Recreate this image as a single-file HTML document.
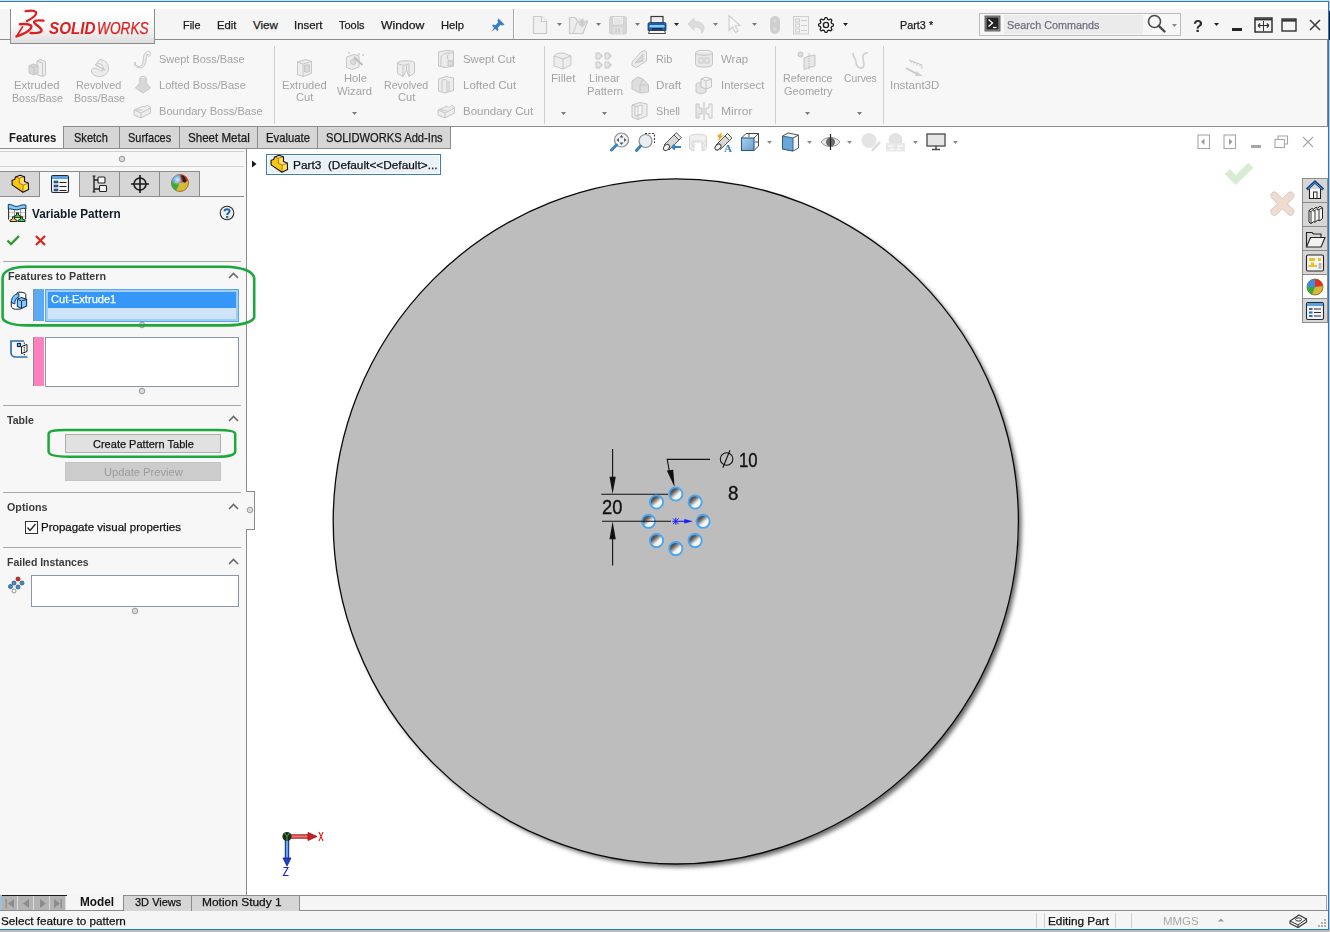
<!DOCTYPE html>
<html><head><meta charset="utf-8"><title>SOLIDWORKS</title>
<style>
html,body{margin:0;padding:0;width:1330px;height:932px;overflow:hidden;background:#f5f5f5;}
body{position:relative;font-family:"Liberation Sans",sans-serif;}
body>div,body>svg{position:absolute;box-sizing:border-box;}
.t{white-space:pre;-webkit-text-stroke:0.25px currentColor;}
</style></head><body>
<div style="left:0px;top:0px;width:1330px;height:932px;background:#f5f5f5"></div>
<div style="left:0px;top:0px;width:1330px;height:1px;background:#e6ded2"></div>
<div style="left:0px;top:1px;width:1329px;height:1px;background:#1c7cd5"></div>
<div style="left:0px;top:2px;width:1328px;height:7px;background:#ffffff"></div>
<div style="left:0px;top:9px;width:1328px;height:30px;background:#f5f5f5"></div>
<div style="left:0px;top:39px;width:1328px;height:1px;background:#8c8c8c"></div>
<div style="left:0px;top:40px;width:1328px;height:108px;background:#f7f7f7"></div>
<div style="left:10px;top:9px;width:145px;height:35px;background:linear-gradient(#ffffff 0%,#fbfbfb 45%,#dedede 100%);border:1px solid #8c8c8c;border-top:none"></div>
<svg style="left:10px;top:6px;" width="40" height="36" viewBox="0 0 40 36"><g fill="none" stroke="#dc1f1f" stroke-linecap="round" stroke-linejoin="round" transform="translate(-10,-6)"><path d="M25.6 11.2 C29 10.6 35 10.2 36.2 12.6 C36.4 15.6 31 19 27 21" stroke-width="2.2"/><path d="M19.8 24.2 C24 23.6 31.4 24 31.4 26.6 C31 30.6 23 34.6 16.4 36.4" stroke-width="2.4"/><path d="M22.6 26.8 L16.6 36.2" stroke-width="1.6"/><path d="M43.6 20.6 C39.5 20.2 34.2 20.2 34 22 C34.2 24.6 41.4 27 41.6 30.6 C41.4 33.2 35 33.2 30.6 33" stroke-width="2.4"/></g></svg>
<div class="t" style="left:49.10px;top:20px;font-size:15.6px;line-height:17.425px;color:#dc1f1f;font-weight:bold;-webkit-text-stroke:0;transform:scaleX(0.9757);transform-origin:0 0;font-style:italic;">SOLID</div>
<div class="t" style="left:96.80px;top:20px;font-size:15.6px;line-height:17.425px;color:#dc1f1f;transform:scaleX(0.8784);transform-origin:0 0;font-style:italic;">WORKS</div>
<div class="t" style="left:183.20px;top:19px;font-size:11.6px;line-height:12.957px;color:#1a1a1a;transform:scaleX(0.9370);transform-origin:0 0;">File</div>
<div class="t" style="left:217.30px;top:19px;font-size:11.6px;line-height:12.957px;color:#1a1a1a;transform:scaleX(0.9745);transform-origin:0 0;">Edit</div>
<div class="t" style="left:253.00px;top:19px;font-size:11.6px;line-height:12.957px;color:#1a1a1a;">View</div>
<div class="t" style="left:294.30px;top:19px;font-size:11.6px;line-height:12.957px;color:#1a1a1a;transform:scaleX(0.9828);transform-origin:0 0;">Insert</div>
<div class="t" style="left:339.20px;top:19px;font-size:11.6px;line-height:12.957px;color:#1a1a1a;transform:scaleX(0.9451);transform-origin:0 0;">Tools</div>
<div class="t" style="left:381.40px;top:19px;font-size:11.6px;line-height:12.957px;color:#1a1a1a;transform:scaleX(1.0534);transform-origin:0 0;">Window</div>
<div class="t" style="left:441.30px;top:19px;font-size:11.6px;line-height:12.957px;color:#1a1a1a;transform:scaleX(0.9690);transform-origin:0 0;">Help</div>
<div class="t" style="left:899.50px;top:19px;font-size:11.6px;line-height:12.957px;color:#1a1a1a;transform:scaleX(0.9340);transform-origin:0 0;">Part3 *</div>
<svg style="left:490px;top:17px;" width="16" height="16" viewBox="0 0 16 16"><g fill="#3a7fc1"><path d="M8.5 1.5 L14.5 7.5 L12.5 8.5 L10.5 8 L7.8 10.7 L8.4 13 L7.3 14 L2 8.7 L3 7.6 L5.3 8.2 L8 5.5 L7.5 3.5 Z"/><path d="M4.5 10.2 L1.2 14.8 L5.8 11.5 Z"/></g></svg>
<div style="left:513px;top:9px;width:1px;height:30px;background:#a9a9a9"></div>
<div style="left:514px;top:9px;width:1px;height:30px;background:#ffffff"></div>
<svg style="left:532px;top:15px;" width="16" height="20" viewBox="0 0 16 20"><path d="M1.5 1.5 H9.5 L14.5 6.5 V18.5 H1.5 Z" fill="#f0f0f0" stroke="#c9c9c9" stroke-width="1.2"/><path d="M9.5 1.5 V6.5 H14.5" fill="#fafafa" stroke="#c9c9c9" stroke-width="1.2"/></svg>
<svg style="left:557px;top:23px;" width="5" height="3" viewBox="0 0 5 3"><path d="M0 0 H5 L2.5 3 Z" fill="#7a7a7a"/></svg>
<svg style="left:568px;top:15px;" width="22" height="20" viewBox="0 0 22 20"><path d="M1.5 18.5 V2.5 H7 L9 4.5 V6 H19.5 L15 18.5 Z" fill="#ededed" stroke="#c9c9c9" stroke-width="1.2"/><path d="M5 18.5 L9 7.5 H20" fill="none" stroke="#cfcfcf" stroke-width="1.2"/><path d="M10 2 L13.5 5.5 V3.5 L15.5 3.5 L15.5 8.5 H18 L14 12.5 L10 8.5 H12.5 V6 Z" fill="#cccccc"/></svg>
<svg style="left:596px;top:23px;" width="5" height="3" viewBox="0 0 5 3"><path d="M0 0 H5 L2.5 3 Z" fill="#7a7a7a"/></svg>
<svg style="left:608px;top:15px;" width="20" height="20" viewBox="0 0 20 20"><rect x="1.5" y="1.5" width="17" height="17.5" rx="2" fill="#d6d6d6" stroke="#d0d0d0"/><rect x="4.5" y="1.5" width="11" height="8.5" fill="#f2f2f2" stroke="#cfcfcf"/><path d="M6 4H14M6 6H14M6 8H14" stroke="#d9d9d9"/><rect x="5.5" y="12" width="9" height="7" fill="#e2e2e2"/><path d="M8 13V18.5M11 13V18.5" stroke="#c8c8c8" stroke-width="1.3"/></svg>
<svg style="left:635px;top:23px;" width="5" height="3" viewBox="0 0 5 3"><path d="M0 0 H5 L2.5 3 Z" fill="#7a7a7a"/></svg>
<svg style="left:647px;top:15px;" width="20" height="20" viewBox="0 0 20 20"><rect x="4" y="1.5" width="12" height="9" fill="#efefef" stroke="#3a3a3a" stroke-width="1.2"/><path d="M1 9 Q1 7.5 2.5 7.5 H17.5 Q19 7.5 19 9 V15.5 H1 Z" fill="#1f5e9e" stroke="#0f3b6e" stroke-width="0.8"/><rect x="2.5" y="10" width="15" height="2.5" fill="#8ccaf2"/><rect x="5" y="13" width="10" height="1.6" fill="#0b2f5a"/><path d="M2.5 15.5 H17.5 L18.5 18.5 H1.5 Z" fill="#f5f5f5" stroke="#333" stroke-width="0.9"/></svg>
<svg style="left:674px;top:23px;" width="5" height="3" viewBox="0 0 5 3"><path d="M0 0 H5 L2.5 3 Z" fill="#222"/></svg>
<svg style="left:686px;top:16px;" width="20" height="18" viewBox="0 0 20 18"><path d="M2 8 L8 2 V5.5 C14 5 18 8 18 12 C18 14 17 16 15.5 17 C16 13 13 10.5 8 11 V14.5 Z" fill="#dcdcdc" stroke="#cfcfcf" stroke-width="0.8"/></svg>
<svg style="left:713px;top:23px;" width="5" height="3" viewBox="0 0 5 3"><path d="M0 0 H5 L2.5 3 Z" fill="#7a7a7a"/></svg>
<svg style="left:727px;top:14px;" width="16" height="20" viewBox="0 0 16 20"><path d="M2 1.5 V16.5 L5.5 13 L8.5 18.5 L11 17.2 L8.2 11.8 L13 11.5 Z" fill="#f7f7f7" stroke="#cdcdcd" stroke-width="1.1"/></svg>
<svg style="left:752px;top:23px;" width="5" height="3" viewBox="0 0 5 3"><path d="M0 0 H5 L2.5 3 Z" fill="#7a7a7a"/></svg>
<svg style="left:769px;top:15px;" width="12" height="20" viewBox="0 0 12 20"><rect x="1" y="1" width="10" height="18" rx="5" fill="#cfcfcf"/><path d="M6 4.5V7.5M4.5 6H7.5M6 12.5V15.5M4.5 14H7.5" stroke="#e6e6e6" stroke-width="0.8"/></svg>
<svg style="left:792px;top:15px;" width="18" height="20" viewBox="0 0 18 20"><rect x="1.5" y="1.5" width="15" height="17.5" fill="#f3f3f3" stroke="#cfcfcf"/><g fill="none" stroke="#cdcdcd"><rect x="3.5" y="4" width="4" height="3"/><rect x="3.5" y="9" width="4" height="3"/><rect x="3.5" y="14" width="4" height="3"/><path d="M9 5.5H15M9 10.5H15M9 15.5H15"/></g></svg>
<svg style="left:818px;top:17px;" width="16" height="16" viewBox="0 0 16 16"><path d="M15.56 7.26 L15.56 8.74 L13.55 9.68 L13.12 10.73 L13.87 12.82 L12.82 13.87 L10.73 13.12 L9.68 13.55 L8.74 15.56 L7.26 15.56 L6.32 13.55 L5.27 13.12 L3.18 13.87 L2.13 12.82 L2.88 10.73 L2.45 9.68 L0.44 8.74 L0.44 7.26 L2.45 6.32 L2.88 5.27 L2.13 3.18 L3.18 2.13 L5.27 2.88 L6.32 2.45 L7.26 0.44 L8.74 0.44 L9.68 2.45 L10.73 2.88 L12.82 2.13 L13.87 3.18 L13.12 5.27 L13.55 6.32 Z" fill="#fafafa" stroke="#1e1e1e" stroke-width="1.3" stroke-linejoin="round"/><circle cx="8" cy="8" r="2.6" fill="none" stroke="#1e1e1e" stroke-width="1.4"/></svg>
<svg style="left:843px;top:23px;" width="5" height="3" viewBox="0 0 5 3"><path d="M0 0 H5 L2.5 3 Z" fill="#222"/></svg>
<div style="left:979px;top:13px;width:202px;height:23px;background:#f7f7f7;border:1px solid #bcbcbc"></div>
<div style="left:1004px;top:15px;width:139px;height:19px;background:#ebebeb"></div>
<svg style="left:984px;top:15px;" width="17" height="17" viewBox="0 0 17 17"><rect x="1" y="1" width="15" height="15" fill="#1a1a1a" stroke="#6b6b6b" stroke-width="1"/><rect x="2" y="2" width="13" height="13" fill="#222" stroke="#e8e8e8" stroke-width="0.6"/><path d="M4.5 4.5 L8.5 8 L4.5 11.5" fill="none" stroke="#fff" stroke-width="1.3"/><path d="M9 12.5 H12.5" stroke="#fff" stroke-width="1.2"/></svg>
<div class="t" style="left:1006.60px;top:19px;font-size:11.6px;line-height:12.957px;color:#6e6e80;transform:scaleX(0.9306);transform-origin:0 0;">Search Commands</div>
<svg style="left:1147px;top:14px;" width="20" height="19" viewBox="0 0 20 19"><circle cx="7.5" cy="7.5" r="6" fill="none" stroke="#4a4a4a" stroke-width="1.6"/><path d="M11.8 11.8 L17.5 17.5" stroke="#4a4a4a" stroke-width="2.4" stroke-linecap="round"/></svg>
<svg style="left:1172px;top:24px;" width="5" height="3" viewBox="0 0 5 3"><path d="M0 0 H5 L2.5 3 Z" fill="#8a8a8a"/></svg>
<div class="t" style="left:1193.00px;top:17px;font-size:16.5px;line-height:18.430px;color:#2a2a2a;font-weight:bold;-webkit-text-stroke:0;transform:scaleX(0.9935);transform-origin:0 0;">?</div>
<svg style="left:1214px;top:23px;" width="5" height="3" viewBox="0 0 5 3"><path d="M0 0 H5 L2.5 3 Z" fill="#222"/></svg>
<div style="left:1232px;top:28px;width:10px;height:3px;background:#262626"></div>
<svg style="left:1254px;top:17px;" width="19" height="16" viewBox="0 0 19 16"><rect x="1" y="1" width="17" height="14" fill="none" stroke="#333" stroke-width="1.5"/><path d="M1 2.5H18" stroke="#333" stroke-width="1.8"/><path d="M9.5 4V14" stroke="#333" stroke-width="1"/><path d="M4 8.5H15M4 8.5L6.2 6.5M4 8.5L6.2 10.5M15 8.5L12.8 6.5M15 8.5L12.8 10.5" stroke="#333" stroke-width="1.2" fill="none"/></svg>
<svg style="left:1281px;top:18px;" width="16" height="14" viewBox="0 0 16 14"><rect x="1" y="1" width="14" height="12" fill="none" stroke="#333" stroke-width="1.4"/><path d="M1 2.5H15" stroke="#333" stroke-width="2.2"/></svg>
<svg style="left:1309px;top:19px;" width="12" height="12" viewBox="0 0 12 12"><path d="M1 1 L11 11 M11 1 L1 11" stroke="#3a3a3a" stroke-width="1.5"/></svg>
<svg style="left:27px;top:58px;" width="20" height="20" viewBox="0 0 20 20"><g stroke="#c6c6c6" stroke-width="1" fill="#e6e6e6" stroke-linejoin="round"><path d="M10 3 L13 1.5 L18.5 3.5 V17 L15.5 18.5 L10 16.5 Z" fill="#eeeeee"/><path d="M10 3 L15.5 5 V18.5" fill="none"/><path d="M2 8 L6 6 L11 7.5 V15 L7 17 L2 15 Z" fill="#d8d8d8"/><path d="M2 8 L7 9.5 V17 M7 9.5 L11 7.5" fill="none"/></g></svg>
<div class="t" style="left:14.20px;top:79px;font-size:11px;line-height:12.287px;color:#a3a3a3;-webkit-text-stroke:0;transform:scaleX(1.0351);transform-origin:0 0;">Extruded</div>
<div class="t" style="left:11.60px;top:92px;font-size:11px;line-height:12.287px;color:#a3a3a3;-webkit-text-stroke:0;transform:scaleX(0.9700);transform-origin:0 0;">Boss/Base</div>
<svg style="left:90px;top:58px;" width="20" height="20" viewBox="0 0 20 20"><g stroke="#c6c6c6" stroke-width="1" fill="#e6e6e6" stroke-linejoin="round"><path d="M9.5 1.5 C15 1.5 18.5 5.5 18.5 10 C18.5 15 14.5 18.5 9.5 18.5 C5 18.5 1.5 16 1.5 13 C1.5 10.5 4 9.5 6 10.5 L12.5 13 C13.5 11.5 13.5 8.5 12 7 C10.5 5.5 8 5.5 6.5 6 Z" fill="#ececec"/><path d="M5 6.5 L15 12" fill="none" stroke="#bdbdbd" stroke-width="1.2"/></g></svg>
<div class="t" style="left:76.30px;top:79px;font-size:11px;line-height:12.287px;color:#a3a3a3;-webkit-text-stroke:0;transform:scaleX(0.9876);transform-origin:0 0;">Revolved</div>
<div class="t" style="left:73.70px;top:92px;font-size:11px;line-height:12.287px;color:#a3a3a3;-webkit-text-stroke:0;transform:scaleX(0.9700);transform-origin:0 0;">Boss/Base</div>
<svg style="left:132px;top:49px;" width="20" height="20" viewBox="0 0 20 20"><g stroke="#c6c6c6" stroke-width="1" fill="#e6e6e6" stroke-linejoin="round"><path d="M3 13 C3 17 7 19 10 16 C11.5 14 11 9 12 6 C13 3 16 1.5 18 3 C19.5 4.5 18.5 7 16.5 7.5 L15 5 C14 8 14.5 13 12.5 16.5 C10.5 19.5 5 19.5 2.5 16 Z" fill="#ededed"/></g></svg>
<div class="t" style="left:158.60px;top:53px;font-size:11px;line-height:12.287px;color:#a3a3a3;-webkit-text-stroke:0;transform:scaleX(0.9937);transform-origin:0 0;">Swept Boss/Base</div>
<svg style="left:134px;top:75px;" width="18" height="19" viewBox="0 0 18 19"><g stroke="#c6c6c6" stroke-width="1" fill="#e6e6e6" stroke-linejoin="round"><ellipse cx="9" cy="3" rx="3.2" ry="1.6" fill="#f0f0f0"/><path d="M5.8 3 V8 L1.5 13 L9 18 L16.5 13 L12.2 8 V3" fill="#d8d8d8"/></g></svg>
<div class="t" style="left:158.60px;top:79px;font-size:11px;line-height:12.287px;color:#a3a3a3;-webkit-text-stroke:0;transform:scaleX(1.0065);transform-origin:0 0;">Lofted Boss/Base</div>
<svg style="left:132px;top:101px;" width="20" height="20" viewBox="0 0 20 20"><g stroke="#c6c6c6" stroke-width="1" fill="#e6e6e6" stroke-linejoin="round"><path d="M2 9 L11 5 C12 6 14 6 15 4 L18.5 6 V12 L9 17 L2 14 Z" fill="#ececec"/><path d="M2 9 L9 12 L18.5 7 M9 12 V17" fill="none"/><path d="M4 9 C7 8 8 10 10 9" fill="none"/></g></svg>
<div class="t" style="left:158.60px;top:105px;font-size:11px;line-height:12.287px;color:#a3a3a3;-webkit-text-stroke:0;transform:scaleX(1.0103);transform-origin:0 0;">Boundary Boss/Base</div>
<div style="left:274px;top:46px;width:1px;height:78px;background:#cfcfcf"></div>
<svg style="left:295px;top:58px;" width="19" height="20" viewBox="0 0 19 20"><g stroke="#c6c6c6" stroke-width="1" fill="#e6e6e6" stroke-linejoin="round"><path d="M2.5 4 L11 1.5 L16.5 3.5 V15.5 L8 18.5 L2.5 16.5 Z" fill="#eeeeee"/><path d="M2.5 4 L8 6 L16.5 3.5 M8 6 V18.5" fill="none"/><rect x="9.5" y="7" width="5" height="7" fill="#dadada"/></g></svg>
<div class="t" style="left:281.60px;top:79px;font-size:11px;line-height:12.287px;color:#a3a3a3;-webkit-text-stroke:0;transform:scaleX(1.0169);transform-origin:0 0;">Extruded</div>
<div class="t" style="left:295.70px;top:91px;font-size:11px;line-height:12.287px;color:#a3a3a3;-webkit-text-stroke:0;transform:scaleX(1.0056);transform-origin:0 0;">Cut</div>
<svg style="left:345px;top:51px;" width="20" height="20" viewBox="0 0 20 20"><g stroke="#c6c6c6" stroke-width="1" fill="#e6e6e6" stroke-linejoin="round"><path d="M1.5 6 L9 3.5 L14 5 V16 L7 18.5 L1.5 16.5 Z" fill="#ececec"/><circle cx="8.2" cy="11" r="2.6" fill="#dcdcdc"/><path d="M9 6 L17.5 14" stroke="#bdbdbd" stroke-width="2"/><path d="M14 2 L14 4 M13 3 H15 M18 3 V5 M17 4 H19 M4 1 V3 M3 2 H5" stroke="#cccccc"/></g></svg>
<div class="t" style="left:343.50px;top:72px;font-size:11px;line-height:12.287px;color:#a3a3a3;-webkit-text-stroke:0;transform:scaleX(1.0131);transform-origin:0 0;">Hole</div>
<div class="t" style="left:337.40px;top:85px;font-size:11px;line-height:12.287px;color:#a3a3a3;-webkit-text-stroke:0;transform:scaleX(1.0231);transform-origin:0 0;">Wizard</div>
<svg style="left:352px;top:112px;" width="5" height="3" viewBox="0 0 5 3"><path d="M0 0 H5 L2.5 3 Z" fill="#7a7a7a"/></svg>
<svg style="left:396px;top:58px;" width="20" height="20" viewBox="0 0 20 20"><g stroke="#c6c6c6" stroke-width="1" fill="#e6e6e6" stroke-linejoin="round"><path d="M1.5 5 C1.5 2 18.5 2 18.5 5 V15 L13 18.5 L10.5 12 L7 18.5 L1.5 15.5 Z" fill="#ececec"/><path d="M1.5 5 C3 7 8 7.5 10.5 7 V12 M10.5 7 L13 5.5 V18.5 M7 8 V18.5" fill="none"/></g></svg>
<div class="t" style="left:383.80px;top:79px;font-size:11px;line-height:12.287px;color:#a3a3a3;-webkit-text-stroke:0;transform:scaleX(0.9636);transform-origin:0 0;">Revolved</div>
<div class="t" style="left:397.60px;top:91px;font-size:11px;line-height:12.287px;color:#a3a3a3;-webkit-text-stroke:0;transform:scaleX(1.0114);transform-origin:0 0;">Cut</div>
<svg style="left:437px;top:49px;" width="18" height="20" viewBox="0 0 18 20"><g stroke="#c6c6c6" stroke-width="1" fill="#e6e6e6" stroke-linejoin="round"><path d="M1.5 3 L10 1.5 L16.5 2 V17 L8 18.5 L1.5 17 Z" fill="#ececec"/><path d="M4 17 V9 C4 6 8 4 12 4 H16.5 M12 4 C10 6 10 10 12 12 H16.5" fill="none"/><rect x="11" y="12" width="5" height="5" fill="#dcdcdc"/></g></svg>
<div class="t" style="left:462.50px;top:53px;font-size:11px;line-height:12.287px;color:#a3a3a3;-webkit-text-stroke:0;transform:scaleX(1.0263);transform-origin:0 0;">Swept Cut</div>
<svg style="left:437px;top:75px;" width="18" height="19" viewBox="0 0 18 19"><g stroke="#c6c6c6" stroke-width="1" fill="#e6e6e6" stroke-linejoin="round"><path d="M1.5 4 L9 1.5 L16.5 3 V15.5 L8 18 L1.5 16 Z" fill="#ececec"/><path d="M5 16.5 V6 C5 4 10 4 10 6 V17 M12 16.5 V6" fill="none"/></g></svg>
<div class="t" style="left:462.50px;top:79px;font-size:11px;line-height:12.287px;color:#a3a3a3;-webkit-text-stroke:0;transform:scaleX(1.0480);transform-origin:0 0;">Lofted Cut</div>
<svg style="left:436px;top:101px;" width="20" height="20" viewBox="0 0 20 20"><g stroke="#c6c6c6" stroke-width="1" fill="#e6e6e6" stroke-linejoin="round"><path d="M2 9 L11 5 C12 7 14 7 16 4 L18.5 6 V12 L9 17 L2 14 Z" fill="#ececec"/><path d="M2 9 L9 12 L18.5 7 M9 12 V17" fill="none"/><path d="M4 9 C7 8 9 11 11 9" fill="none"/></g></svg>
<div class="t" style="left:462.50px;top:105px;font-size:11px;line-height:12.287px;color:#a3a3a3;-webkit-text-stroke:0;transform:scaleX(1.0421);transform-origin:0 0;">Boundary Cut</div>
<div style="left:544px;top:46px;width:1px;height:78px;background:#cfcfcf"></div>
<svg style="left:552px;top:51px;" width="21" height="19" viewBox="0 0 21 19"><g stroke="#c6c6c6" stroke-width="1" fill="#e6e6e6" stroke-linejoin="round"><path d="M2 5 C5 1.5 11 1.5 14 3 L19 5 V14 L11 18 L2 15 Z" fill="#ededed"/><path d="M2 5 L11 8 L19 5 M11 8 V18" fill="none"/></g></svg>
<div class="t" style="left:551.20px;top:72px;font-size:11px;line-height:12.287px;color:#a3a3a3;-webkit-text-stroke:0;transform:scaleX(1.0556);transform-origin:0 0;">Fillet</div>
<svg style="left:561px;top:112px;" width="5" height="3" viewBox="0 0 5 3"><path d="M0 0 H5 L2.5 3 Z" fill="#7a7a7a"/></svg>
<svg style="left:594px;top:51px;" width="20" height="19" viewBox="0 0 20 19"><g stroke="#c6c6c6" stroke-width="1" fill="#e6e6e6" stroke-linejoin="round"><path d="M2 2 H6 V4 H8 V6 H6 V8 H2 Z M11 2 H15 V4 H17 V6 H15 V8 H11 Z M2 11 H6 V13 H8 V15 H6 V17 H2 Z M11 11 H15 V13 H17 V15 H15 V17 H11 Z" fill="#e6e6e6"/></g></svg>
<div class="t" style="left:589.00px;top:72px;font-size:11px;line-height:12.287px;color:#a3a3a3;-webkit-text-stroke:0;transform:scaleX(1.0072);transform-origin:0 0;">Linear</div>
<div class="t" style="left:586.60px;top:85px;font-size:11px;line-height:12.287px;color:#a3a3a3;-webkit-text-stroke:0;transform:scaleX(1.0176);transform-origin:0 0;">Pattern</div>
<svg style="left:602px;top:112px;" width="5" height="3" viewBox="0 0 5 3"><path d="M0 0 H5 L2.5 3 Z" fill="#7a7a7a"/></svg>
<svg style="left:630px;top:49px;" width="18" height="20" viewBox="0 0 18 20"><g stroke="#c6c6c6" stroke-width="1" fill="#e6e6e6" stroke-linejoin="round"><path d="M2 13 L11 3 L14 1.5 L16.5 3 V12 L6 18.5 L2 16.5 Z" fill="#ececec"/><path d="M5 14 L13 5 V12 Z" fill="#dadada"/></g></svg>
<div class="t" style="left:656.40px;top:53px;font-size:11px;line-height:12.287px;color:#a3a3a3;-webkit-text-stroke:0;transform:scaleX(0.9879);transform-origin:0 0;">Rib</div>
<svg style="left:630px;top:75px;" width="20" height="19" viewBox="0 0 20 19"><g stroke="#c6c6c6" stroke-width="1" fill="#e6e6e6" stroke-linejoin="round"><path d="M2 6 L8 2 L13 4 L18.5 10 V17 L10 18 L2 14 Z" fill="#dedede"/><path d="M13 4 L10 10 V18 M10 10 L18.5 10" fill="none"/></g></svg>
<div class="t" style="left:656.40px;top:79px;font-size:11px;line-height:12.287px;color:#a3a3a3;-webkit-text-stroke:0;transform:scaleX(1.0624);transform-origin:0 0;">Draft</div>
<svg style="left:630px;top:101px;" width="19" height="20" viewBox="0 0 19 20"><g stroke="#c6c6c6" stroke-width="1" fill="#e6e6e6" stroke-linejoin="round"><path d="M2 4 L10 1.5 L17 3 V15 L8 18.5 L2 16 Z" fill="#ececec"/><path d="M5 6 L12 4 V13 L5 15 Z" fill="#f6f6f6"/><path d="M2 4 L8 6 V18.5" fill="none"/></g></svg>
<div class="t" style="left:656.40px;top:105px;font-size:11px;line-height:12.287px;color:#a3a3a3;-webkit-text-stroke:0;transform:scaleX(0.9806);transform-origin:0 0;">Shell</div>
<svg style="left:694px;top:49px;" width="20" height="20" viewBox="0 0 20 20"><g stroke="#c6c6c6" stroke-width="1" fill="#e6e6e6" stroke-linejoin="round"><ellipse cx="10" cy="4" rx="8.5" ry="2.8" fill="#eeeeee"/><path d="M1.5 4 V15.5 C1.5 19 18.5 19 18.5 15.5 V4" fill="#e8e8e8"/><path d="M1.5 4 C1.5 7 18.5 7 18.5 4" fill="none"/><rect x="5" y="9" width="4" height="5" fill="none"/><rect x="11" y="9" width="4" height="5" fill="none"/></g></svg>
<div class="t" style="left:720.50px;top:53px;font-size:11px;line-height:12.287px;color:#a3a3a3;-webkit-text-stroke:0;transform:scaleX(1.0395);transform-origin:0 0;">Wrap</div>
<svg style="left:694px;top:75px;" width="20" height="20" viewBox="0 0 20 20"><g stroke="#c6c6c6" stroke-width="1" fill="#e6e6e6" stroke-linejoin="round"><path d="M2 9 L7 7 V12 L12 14 V17 L7 19 L2 17 Z" fill="#e4e4e4"/><path d="M7 4 L12 2 L17.5 4 V12 L12 14 L7 12 Z" fill="#f0f0f0"/><path d="M7 4 L12 6 L17.5 4 M12 6 V14" fill="none"/></g></svg>
<div class="t" style="left:720.50px;top:79px;font-size:11px;line-height:12.287px;color:#a3a3a3;-webkit-text-stroke:0;transform:scaleX(1.0264);transform-origin:0 0;">Intersect</div>
<svg style="left:694px;top:101px;" width="20" height="20" viewBox="0 0 20 20"><g stroke="#c6c6c6" stroke-width="1" fill="#e6e6e6" stroke-linejoin="round"><path d="M2 3 H5 V7 H8 V13 H5 V17 H2 Z" fill="#e6e6e6"/><path d="M18 3 H15 V7 H12 V13 H15 V17 H18 Z" fill="#f2f2f2"/><path d="M10 1 V19" stroke="#bdbdbd"/></g></svg>
<div class="t" style="left:720.50px;top:105px;font-size:11px;line-height:12.287px;color:#a3a3a3;-webkit-text-stroke:0;transform:scaleX(1.0972);transform-origin:0 0;">Mirror</div>
<div style="left:775px;top:46px;width:1px;height:78px;background:#cfcfcf"></div>
<svg style="left:797px;top:51px;" width="20" height="20" viewBox="0 0 20 20"><g stroke="#c6c6c6" stroke-width="1" fill="#e6e6e6" stroke-linejoin="round"><circle cx="3.5" cy="3.5" r="2.5" fill="#dcdcdc"/><path d="M7 7 L12 5 L18 4 V15 L12 16.5 L7 18.5 Z" fill="#e6e6e6"/><path d="M12 2 V19" stroke="#bdbdbd" stroke-dasharray="1.5 1" fill="none"/></g></svg>
<div class="t" style="left:782.80px;top:72px;font-size:11px;line-height:12.287px;color:#a3a3a3;-webkit-text-stroke:0;transform:scaleX(0.9771);transform-origin:0 0;">Reference</div>
<div class="t" style="left:783.50px;top:85px;font-size:11px;line-height:12.287px;color:#a3a3a3;-webkit-text-stroke:0;transform:scaleX(1.0043);transform-origin:0 0;">Geometry</div>
<svg style="left:805px;top:112px;" width="5" height="3" viewBox="0 0 5 3"><path d="M0 0 H5 L2.5 3 Z" fill="#7a7a7a"/></svg>
<svg style="left:850px;top:50px;" width="20" height="20" viewBox="0 0 20 20"><path d="M3 3 C3 7 6 9 6 12 C6 16 9 18.5 11.5 18 C15 17.5 14 12 13 9 C12 6 14 2 18 3" fill="none" stroke="#d0d0d0" stroke-width="1.6"/></svg>
<div class="t" style="left:843.70px;top:72px;font-size:11px;line-height:12.287px;color:#a3a3a3;-webkit-text-stroke:0;transform:scaleX(0.9406);transform-origin:0 0;">Curves</div>
<svg style="left:857px;top:112px;" width="5" height="3" viewBox="0 0 5 3"><path d="M0 0 H5 L2.5 3 Z" fill="#7a7a7a"/></svg>
<div style="left:883px;top:46px;width:1px;height:78px;background:#cfcfcf"></div>
<svg style="left:905px;top:58px;" width="20" height="20" viewBox="0 0 20 20"><g stroke="#c8c8c8" fill="none"><path d="M4 2 L17 7 V11" /><path d="M6 2.5 V5 M9 3.8 V6.5 M12 5 V7.5 M15 6.2 V8.7"/><path d="M1 10 L13 16.5" stroke-width="1.8"/></g><path d="M11 13 L18 18 L10 18 Z" fill="#cfcfcf"/></svg>
<div class="t" style="left:890.30px;top:79px;font-size:11px;line-height:12.287px;color:#a3a3a3;-webkit-text-stroke:0;transform:scaleX(1.0472);transform-origin:0 0;">Instant3D</div>
<div style="left:63px;top:126px;width:1265px;height:1px;background:#8c8c8c"></div>
<div style="left:247px;top:127px;width:1080px;height:768px;background:#ffffff"></div>
<div style="left:1327px;top:40px;width:1px;height:87px;background:#8c8484"></div>
<div style="left:0px;top:148px;width:451px;height:1px;background:#8c8c8c"></div>
<div style="left:63px;top:126px;width:57px;height:23px;background:#d6d6d6;border:1px solid #8c8c8c"></div>
<div style="left:119px;top:126px;width:61px;height:23px;background:#d6d6d6;border:1px solid #8c8c8c"></div>
<div style="left:179px;top:126px;width:79px;height:23px;background:#d6d6d6;border:1px solid #8c8c8c"></div>
<div style="left:257px;top:126px;width:61px;height:23px;background:#d6d6d6;border:1px solid #8c8c8c"></div>
<div style="left:317px;top:126px;width:134px;height:23px;background:#d6d6d6;border:1px solid #8c8c8c"></div>
<div class="t" style="left:8.70px;top:132px;font-size:12px;line-height:13.404px;color:#1a1a1a;font-weight:bold;-webkit-text-stroke:0;transform:scaleX(0.9452);transform-origin:0 0;">Features</div>
<div class="t" style="left:74.30px;top:132px;font-size:12.4px;line-height:13.851px;color:#1a1a1a;transform:scaleX(0.8922);transform-origin:0 0;">Sketch</div>
<div class="t" style="left:128.40px;top:132px;font-size:12.4px;line-height:13.851px;color:#1a1a1a;transform:scaleX(0.8831);transform-origin:0 0;">Surfaces</div>
<div class="t" style="left:188.00px;top:132px;font-size:12.4px;line-height:13.851px;color:#1a1a1a;transform:scaleX(0.9342);transform-origin:0 0;">Sheet Metal</div>
<div class="t" style="left:266.20px;top:132px;font-size:12.4px;line-height:13.851px;color:#1a1a1a;transform:scaleX(0.9122);transform-origin:0 0;">Evaluate</div>
<div class="t" style="left:326.00px;top:132px;font-size:12.4px;line-height:13.851px;color:#1a1a1a;transform:scaleX(0.9014);transform-origin:0 0;">SOLIDWORKS Add-Ins</div>
<div style="left:0px;top:149px;width:246px;height:746px;background:#f7f7f7"></div>
<div style="left:246px;top:149px;width:1px;height:342px;background:#8c8c8c"></div>
<div style="left:246px;top:529px;width:1px;height:366px;background:#8c8c8c"></div>
<div style="left:246px;top:491px;width:9px;height:39px;background:#f7f7f7;border:1px solid #8c8c8c;border-left:none"></div>
<svg style="left:246px;top:505.5px;" width="8" height="8" viewBox="0 0 8 8"><circle cx="4" cy="4" r="2.8" fill="#d9d9d9" stroke="#9a9a9a" stroke-width="1"/></svg>
<div style="left:0px;top:151px;width:244px;height:1px;background:#d2d2d2"></div>
<div style="left:0px;top:166px;width:244px;height:1px;background:#d2d2d2"></div>
<svg style="left:118px;top:155px;" width="8" height="8" viewBox="0 0 8 8"><circle cx="4" cy="4" r="2.8" fill="#d9d9d9" stroke="#9a9a9a" stroke-width="1"/></svg>
<div style="left:0px;top:171px;width:200px;height:1px;background:#8c8c8c"></div>
<div style="left:0px;top:196px;width:244px;height:1px;background:#8c8c8c"></div>
<div style="left:-1px;top:171px;width:41px;height:26px;background:#d6d6d6;border:1px solid #8c8c8c"></div>
<div style="left:39px;top:171px;width:41px;height:26px;background:#f7f7f7;border:1px solid #8c8c8c;border-bottom:none"></div>
<div style="left:79px;top:171px;width:41px;height:26px;background:#d6d6d6;border:1px solid #8c8c8c"></div>
<div style="left:119px;top:171px;width:41px;height:26px;background:#d6d6d6;border:1px solid #8c8c8c"></div>
<div style="left:159px;top:171px;width:41px;height:26px;background:#d6d6d6;border:1px solid #8c8c8c"></div>
<div style="left:40px;top:196px;width:39px;height:1px;background:#f7f7f7"></div>
<svg style="left:8px;top:172px;" width="26" height="24" viewBox="0 0 26 24"><g stroke-linejoin="round"><path d="M4.1 12.9 V8.2 L6.7 7.5 L7.5 4.9 L11.3 6.2 V11.1 L15.2 13.1 L14.9 20.3 Z" fill="#f6c812"/><path d="M11.3 6.2 L16.5 4.8 V9.5 L11.3 11.1 Z M15.2 13.1 L20.3 11.1 L20.6 17.5 L14.9 20.3 Z" fill="#fbe44c"/><path d="M7.5 4.9 L12.1 3.2 L16.5 4.8 L11.3 6.2 Z M11.3 11.1 L16.5 9.5 L20.3 11.1 L15.2 13.1 Z" fill="#f9dc98"/><path d="M7.5 4.9 L11.3 6.2 L16.5 4.8 M11.3 6.2 V11.1 L15.2 13.1 L20.3 11.1 M15.2 13.1 L14.9 20.3" fill="none" stroke="#b8680c" stroke-width="0.9"/><path d="M4.1 12.9 V8.2 L6.7 7.5 L7.5 4.9 L12.1 3.2 L16.5 4.8 V9.5 L20.3 11.1 L20.6 17.5 L14.9 20.3 Z" fill="none" stroke="#111" stroke-width="1.1"/></g></svg>
<svg style="left:50px;top:174px;" width="20" height="20" viewBox="0 0 20 20"><rect x="1.5" y="1.5" width="17" height="17" rx="1.5" fill="#f4f4f4" stroke="#1c2a3a" stroke-width="1.1"/><rect x="2" y="2" width="16" height="3" fill="#5da2e0"/><rect x="4" y="7" width="4" height="2" fill="#2a6fb5" stroke="#0c2a4a" stroke-width="0.5"/><rect x="4" y="11" width="4" height="2" fill="#2a6fb5" stroke="#0c2a4a" stroke-width="0.5"/><rect x="4" y="15" width="4" height="2" fill="#2a6fb5" stroke="#0c2a4a" stroke-width="0.5"/><path d="M9.5 8.5 H16.5 M9.5 12.5 H16.5 M9.5 16.5 H16.5" stroke="#222" stroke-width="1"/></svg>
<svg style="left:90px;top:174px;" width="20" height="20" viewBox="0 0 20 20"><path d="M4 2 V18 M4 6 H8 M4 15 H9" stroke="#222" stroke-width="1.4" fill="none"/><path d="M2.5 2 H5.5 M2.5 18 H5.5" stroke="#222"/><rect x="8" y="3" width="7" height="6" rx="1" fill="#f6f6f6" stroke="#222" stroke-width="1.1"/><rect x="9.5" y="11.5" width="7" height="6" rx="1" fill="#f6f6f6" stroke="#222" stroke-width="1.1"/></svg>
<svg style="left:130px;top:174px;" width="20" height="20" viewBox="0 0 20 20"><circle cx="10" cy="10" r="6" fill="none" stroke="#1a1a1a" stroke-width="1.6"/><path d="M10 1 V19 M1 10 H19" stroke="#1a1a1a" stroke-width="1.6"/></svg>
<svg style="left:170px;top:173px;" width="20" height="20" viewBox="0 0 20 20"><defs><radialGradient id="ball" cx="35%" cy="30%" r="70%"><stop offset="0" stop-color="#fff" stop-opacity="0.8"/><stop offset="0.5" stop-color="#fff" stop-opacity="0"/></radialGradient></defs><circle cx="10" cy="10" r="8.5" fill="#d8b838" stroke="#8a5a20" stroke-width="0.8"/><path d="M10 10 L10 1.5 A8.5 8.5 0 0 1 18.2 8 Z" fill="#e03020"/><path d="M10 10 L10 1.5 A8.5 8.5 0 0 0 1.6 9 Z" fill="#3a8ee0"/><path d="M10 10 L1.6 9 A8.5 8.5 0 0 0 6 17.6 Z" fill="#3aa83a"/><ellipse cx="13.5" cy="6" rx="2" ry="4" transform="rotate(-30 13.5 6)" fill="#222"/><circle cx="10" cy="10" r="8.5" fill="url(#ball)"/></svg>
<svg style="left:5px;top:201px;" width="24" height="24" viewBox="0 0 24 24"><rect x="3.6" y="6" width="16.9" height="13" fill="#fafafa"/><path d="M3.6 11.5 H20.5 M3.6 15.3 H20.5" stroke="#c4c4c4" stroke-width="0.9"/><path d="M9.5 7 V18.5 M15.6 6.5 V18.5" stroke="#8a8a8a" stroke-width="0.9"/><path d="M3.6 6 V18.6 M20.6 6 V18.4" stroke="#222" stroke-width="1"/><path d="M3.3 3.4 C7 2.8 9 6 12.2 5.4 C15.2 4.8 17 3 20.9 4.1 V7.8 C17.2 6.6 15.4 8.4 12.2 8.8 C9 9.2 6.8 7.6 3.3 7.9 Z" fill="#86c8f2" stroke="#0c3a6e" stroke-width="1"/><path d="M11.5 11.8 H13.5 V14.1 L16.0 15.4 V16.6 H9.0 V15.4 L11.5 14.1 Z" fill="#3fd33f" stroke="#111" stroke-width="0.9" stroke-linejoin="round"/><path d="M7.5 15.8 H9.5 V18.0 L12.0 19.3 V20.5 H5.0 V19.3 L7.5 18.0 Z" fill="#f5d24a" stroke="#111" stroke-width="0.9" stroke-linejoin="round"/><path d="M15.6 15.8 H17.6 V18.0 L20.1 19.3 V20.5 H13.1 V19.3 L15.6 18.0 Z" fill="#3fd33f" stroke="#111" stroke-width="0.9" stroke-linejoin="round"/></svg>
<div class="t" style="left:32.00px;top:208px;font-size:12px;line-height:13.404px;color:#111a2a;font-weight:bold;-webkit-text-stroke:0;transform:scaleX(0.9777);transform-origin:0 0;">Variable Pattern</div>
<svg style="left:219px;top:205px;" width="16" height="16" viewBox="0 0 16 16"><circle cx="8" cy="8" r="6.8" fill="#efefef" stroke="#2a2a2a" stroke-width="1.1"/><path d="M5.6 6.2 C5.6 3.6 10.6 3.4 10.6 6.1 C10.6 7.9 8.2 8.2 8.2 10" fill="none" stroke="#2266aa" stroke-width="2"/><rect x="7.1" y="11" width="2.2" height="2.2" fill="#2266aa"/></svg>
<svg style="left:6px;top:234px;" width="15" height="12" viewBox="0 0 15 12"><path d="M1.5 6.5 L5 10 L13 2" fill="none" stroke="#2d9a2d" stroke-width="2.4"/></svg>
<svg style="left:34px;top:234px;" width="13" height="13" viewBox="0 0 13 13"><path d="M2 2 L11 11 M11 2 L2 11" stroke="#d9261c" stroke-width="2.2"/></svg>
<div style="left:3px;top:261px;width:238px;height:1px;background:#a8a8a8"></div>
<div class="t" style="left:7.70px;top:270px;font-size:11.6px;line-height:12.957px;color:#3b3b3b;font-weight:bold;-webkit-text-stroke:0;transform:scaleX(0.9287);transform-origin:0 0;">Features to Pattern</div>
<svg style="left:228px;top:272px;" width="11" height="7" viewBox="0 0 11 7"><path d="M1 6 L5.5 1.5 L10 6" fill="none" stroke="#6a6a6a" stroke-width="1.6"/></svg>
<svg style="left:6px;top:288px;" width="26" height="26" viewBox="0 0 26 26"><path d="M5.3 13 V18.2 C5.3 20 7.5 21.2 9.5 21.2 H14 L19.8 18 V6.5 C19.8 5 17 4.2 14 4.2 C12 4.2 11 4.5 10.5 5.5" fill="#fbfbfb" stroke="#222" stroke-width="1"/><path d="M5.4 14.5 C5.4 9.5 8 6 12.8 5.6 L13 9 C10 9.5 8.8 12 8.8 16 Z" fill="#7cc4f4" stroke="#0a3a70" stroke-width="1"/><path d="M11.4 11.2 L15.5 9.5 L20.6 11.5 V18 L15.5 20.4 L11.4 18.5 Z" fill="#8fc8f0" stroke="#0a3a70" stroke-width="1.1"/><path d="M11.4 11.2 L15.5 13 L20.6 11.5 M15.5 13 V20.4" fill="none" stroke="#0a3a70" stroke-width="1"/></svg>
<div style="left:33px;top:289px;width:11px;height:32px;background:#5aaaf5;border-left:1px solid #8c8c8c"></div>
<div style="left:45px;top:289px;width:194px;height:33px;background:#cfe4f8;border:1px solid #5aa6ea"></div>
<div style="left:46px;top:290px;width:192px;height:31px;background:transparent;border:2px solid #9fcdf5;border-top-width:2px"></div>
<div style="left:48px;top:292px;width:188px;height:16px;background:#3597f8"></div>
<div class="t" style="left:50.70px;top:293px;font-size:11.6px;line-height:12.957px;color:#ffffff;transform:scaleX(0.9557);transform-origin:0 0;">Cut-Extrude1</div>
<svg style="left:138px;top:321.4px;" width="8" height="8" viewBox="0 0 8 8"><circle cx="4" cy="4" r="2.8" fill="#d9d9d9" stroke="#9a9a9a" stroke-width="1"/></svg>
<svg style="left:6px;top:336px;" width="26" height="26" viewBox="0 0 26 26"><path d="M18 5 H5 V16.5 C5 19 7 21 9.5 21 H21.5" fill="none" stroke="#2a70b0" stroke-width="1.7"/><rect x="11.5" y="7.5" width="3" height="3" fill="#9cd0f6" stroke="#0a2a5a" stroke-width="1.2"/><path d="M15.5 10.5 L21 8.5 V15.5 L15.5 17.5 Z" fill="#f4f4f4" stroke="#222" stroke-width="1"/><path d="M18.3 6.5 V20" stroke="#111" stroke-width="1" stroke-dasharray="1.3 1"/></svg>
<div style="left:33px;top:337px;width:11px;height:49px;background:#ff80c0;border-left:1px solid #8c8c8c"></div>
<div style="left:45px;top:337px;width:194px;height:50px;background:#ffffff;border:1px solid #8a94ad"></div>
<svg style="left:138px;top:387px;" width="8" height="8" viewBox="0 0 8 8"><circle cx="4" cy="4" r="2.8" fill="#d9d9d9" stroke="#9a9a9a" stroke-width="1"/></svg>
<div style="left:3px;top:405px;width:238px;height:1px;background:#a8a8a8"></div>
<div class="t" style="left:7.30px;top:414px;font-size:11.6px;line-height:12.957px;color:#3b3b3b;font-weight:bold;-webkit-text-stroke:0;transform:scaleX(0.9130);transform-origin:0 0;">Table</div>
<svg style="left:228px;top:415px;" width="11" height="7" viewBox="0 0 11 7"><path d="M1 6 L5.5 1.5 L10 6" fill="none" stroke="#6a6a6a" stroke-width="1.6"/></svg>
<div style="left:65px;top:434px;width:156px;height:19px;background:#e1e1e1;border:1px solid #adadad"></div>
<div class="t" style="left:92.60px;top:438px;font-size:11.6px;line-height:12.957px;color:#111;transform:scaleX(0.9501);transform-origin:0 0;">Create Pattern Table</div>
<div style="left:65px;top:462px;width:156px;height:19px;background:#cccccc;border:1px solid #c4c4c4"></div>
<div class="t" style="left:103.70px;top:466px;font-size:11.6px;line-height:12.957px;color:#9b9b9b;-webkit-text-stroke:0;transform:scaleX(0.9634);transform-origin:0 0;">Update Preview</div>
<div style="left:3px;top:492px;width:238px;height:1px;background:#a8a8a8"></div>
<div class="t" style="left:7.40px;top:501px;font-size:11.6px;line-height:12.957px;color:#3b3b3b;font-weight:bold;-webkit-text-stroke:0;transform:scaleX(0.9249);transform-origin:0 0;">Options</div>
<svg style="left:228px;top:503px;" width="11" height="7" viewBox="0 0 11 7"><path d="M1 6 L5.5 1.5 L10 6" fill="none" stroke="#6a6a6a" stroke-width="1.6"/></svg>
<svg style="left:25px;top:521px;" width="13" height="13" viewBox="0 0 13 13"><rect x="0.5" y="0.5" width="12" height="12" fill="#fff" stroke="#333" stroke-width="1"/><path d="M2.5 6.5 L5 9.5 L10.5 3" fill="none" stroke="#222" stroke-width="1.3"/></svg>
<div class="t" style="left:41.40px;top:521px;font-size:11.6px;line-height:12.957px;color:#111;transform:scaleX(0.9913);transform-origin:0 0;">Propagate visual properties</div>
<div style="left:3px;top:547px;width:238px;height:1px;background:#a8a8a8"></div>
<div class="t" style="left:7.40px;top:556px;font-size:11.6px;line-height:12.957px;color:#3b3b3b;font-weight:bold;-webkit-text-stroke:0;transform:scaleX(0.9042);transform-origin:0 0;">Failed Instances</div>
<svg style="left:228px;top:558px;" width="11" height="7" viewBox="0 0 11 7"><path d="M1 6 L5.5 1.5 L10 6" fill="none" stroke="#6a6a6a" stroke-width="1.6"/></svg>
<svg style="left:8px;top:576px;" width="19" height="19" viewBox="0 0 19 19"><g stroke="#1f4f80" stroke-width="0.8"><circle cx="10" cy="3" r="2" fill="#d42a1c" stroke="#8a1a10"/><circle cx="6" cy="7" r="2" fill="#4a90d0"/><circle cx="14" cy="7" r="2" fill="#4a90d0"/><circle cx="2.5" cy="10.5" r="2" fill="#4a90d0"/><circle cx="10" cy="11" r="2" fill="#4a90d0"/><circle cx="6" cy="15" r="2" fill="#fff" stroke="#777"/></g></svg>
<div style="left:31px;top:575px;width:208px;height:32px;background:#ffffff;border:1px solid #8a94ad"></div>
<svg style="left:131px;top:607px;" width="8" height="8" viewBox="0 0 8 8"><circle cx="4" cy="4" r="2.8" fill="#d9d9d9" stroke="#9a9a9a" stroke-width="1"/></svg>
<svg style="left:0px;top:262px;" width="258" height="68" viewBox="0 0 258 68"><path d="M27 4.7 H226 C241 5 253 9 254.2 16 V55.4 C253 60 241 63.4 226 63.4 H27 C12 63.4 3 60 2.6 55.4 V16 C3 9 12 5 27 4.7 Z" fill="none" stroke="#1ca83c" stroke-width="2.6" stroke-linejoin="round"/></svg>
<svg style="left:46px;top:428px;" width="193" height="32" viewBox="0 0 193 32"><path d="M18.8 1.9 H171 C181 1.9 189.2 3 189.2 6 V23.4 C189.2 27 181 28.7 171 28.7 H23 C10 28.7 2.6 27 2.6 23.4 V6 C2.6 3 10 1.9 18.8 1.9 Z" fill="none" stroke="#1ca83c" stroke-width="2.5" stroke-linejoin="round"/></svg>
<div style="left:0px;top:895px;width:1328px;height:16px;background:#f5f5f5"></div>
<div style="left:247px;top:895px;width:1080px;height:1px;background:#8c8c8c"></div>
<div style="left:1326px;top:895px;width:1px;height:16px;background:#9aa6b0"></div>
<div style="left:0px;top:910px;width:1328px;height:1px;background:#8c8c8c"></div>
<div style="left:0px;top:911px;width:1328px;height:18px;background:#f5f5f5"></div>
<div style="left:0px;top:929px;width:1329px;height:1px;background:#1c7cd5"></div>
<div style="left:0px;top:930px;width:1330px;height:2px;background:#bdbdbd"></div>
<div style="left:1328px;top:1px;width:1px;height:929px;background:#1c7cd5"></div>
<div style="left:1329px;top:0px;width:1px;height:932px;background:#cbc2b9"></div>
<div style="left:1329px;top:11px;width:1px;height:29px;background:#1a1a1a"></div>
<svg style="left:251px;top:160px;" width="6" height="8" viewBox="0 0 6 8"><path d="M1 0.5 L5.5 4 L1 7.5 Z" fill="#1a1a1a"/></svg>
<div style="left:266px;top:154px;width:175px;height:21px;background:#eaf2f8;border:1px solid #3a7fb5;box-shadow:inset 0 0 0 1px #ffffff"></div>
<svg style="left:267px;top:152px;" width="26" height="24" viewBox="0 0 26 24"><g stroke-linejoin="round"><path d="M4.1 12.9 V8.2 L6.7 7.5 L7.5 4.9 L11.3 6.2 V11.1 L15.2 13.1 L14.9 20.3 Z" fill="#f6c812"/><path d="M11.3 6.2 L16.5 4.8 V9.5 L11.3 11.1 Z M15.2 13.1 L20.3 11.1 L20.6 17.5 L14.9 20.3 Z" fill="#fbe44c"/><path d="M7.5 4.9 L12.1 3.2 L16.5 4.8 L11.3 6.2 Z M11.3 11.1 L16.5 9.5 L20.3 11.1 L15.2 13.1 Z" fill="#f9dc98"/><path d="M7.5 4.9 L11.3 6.2 L16.5 4.8 M11.3 6.2 V11.1 L15.2 13.1 L20.3 11.1 M15.2 13.1 L14.9 20.3" fill="none" stroke="#b8680c" stroke-width="0.9"/><path d="M4.1 12.9 V8.2 L6.7 7.5 L7.5 4.9 L12.1 3.2 L16.5 4.8 V9.5 L20.3 11.1 L20.6 17.5 L14.9 20.3 Z" fill="none" stroke="#111" stroke-width="1.1"/></g></svg>
<div class="t" style="left:292.60px;top:159px;font-size:11.6px;line-height:12.957px;color:#111;transform:scaleX(1.0218);transform-origin:0 0;">Part3  (Default&lt;&lt;Default&gt;...</div>
<svg style="left:610px;top:132px;" width="20" height="20" viewBox="0 0 20 20"><circle cx="11.5" cy="8" r="7" fill="#eef3f8" stroke="#8a8a8a" stroke-width="1.2"/><path d="M11.5 3 L9.5 5.5 H13.5 Z M11.5 13 L9.5 10.5 H13.5 Z M6.5 8 L9 6 V10 Z M16.5 8 L14 6 V10 Z" fill="#555"/><path d="M6.5 13 L1.5 18" stroke="#3b82b9" stroke-width="3" stroke-linecap="round"/></svg>
<svg style="left:635px;top:132px;" width="21" height="20" viewBox="0 0 21 20"><path d="M10 1.5 H19.5 V11" fill="none" stroke="#333" stroke-width="1.1" stroke-dasharray="2 1.5"/><circle cx="10.5" cy="9" r="6.5" fill="#e8eef4" stroke="#8a8a8a" stroke-width="1.2"/><path d="M5.5 14 L1.5 18.5" stroke="#3b82b9" stroke-width="3" stroke-linecap="round"/></svg>
<svg style="left:662px;top:132px;" width="20" height="20" viewBox="0 0 20 20"><path d="M2 13 L12 3 L17 8 L7 18 Z" fill="#d8d8d8" stroke="#555" stroke-width="1"/><path d="M12 3 L14.5 0.8 L19.2 5.5 L17 8 Z" fill="#eaeaea" stroke="#555" stroke-width="1"/><ellipse cx="4.5" cy="15.5" rx="2.5" ry="3.5" transform="rotate(45 4.5 15.5)" fill="#f4f4f4" stroke="#444"/><path d="M10 15 H19 M10 15 L13 12.5 M10 15 L13 17.5" stroke="#3a7fc1" stroke-width="2" fill="none"/></svg>
<svg style="left:688px;top:132px;" width="20" height="20" viewBox="0 0 20 20"><path d="M1.5 5 C1.5 1.2 18.5 1.2 18.5 5 V15.5 C18.5 17.5 16.5 18.5 14 18.8 V9.5 C12.5 8.8 7.5 8.8 6 9.5 V18.8 C3.5 18.5 1.5 17.5 1.5 15.5 Z" fill="#f0f0f0" stroke="#d4d4d4" stroke-width="1"/><path d="M6 9.5 C7.5 10.2 12.5 10.2 14 9.5" fill="none" stroke="#d8d8d8"/><path d="M2.5 13 L5.5 8 M2.5 17 L5.5 12 M14.5 13 L17.5 8 M14.5 17.5 L17.5 12" stroke="#dcdcdc" stroke-width="1.2"/></svg>
<svg style="left:713px;top:132px;" width="21" height="20" viewBox="0 0 21 20"><path d="M4 4 L9 0.5 L8 4 L11 3 L5 9 L6 5.5 Z" fill="#f0a020"/><path d="M3 13 L12 4 L16.5 8.5 L7.5 17.5 Z" fill="#d8d8d8" stroke="#555" stroke-width="1"/><path d="M12 4 L14.5 1.5 L19 6 L16.5 8.5 Z" fill="#eaeaea" stroke="#555"/><ellipse cx="5" cy="15" rx="2.4" ry="3.4" transform="rotate(45 5 15)" fill="#f4f4f4" stroke="#444"/><text x="11" y="19.5" font-family="Liberation Serif" font-size="11" font-weight="bold" fill="#3a7fc1">A</text></svg>
<svg style="left:740px;top:132px;" width="20" height="20" viewBox="0 0 20 20"><defs><linearGradient id="cubeg" x1="0" y1="0" x2="1" y2="1"><stop offset="0" stop-color="#a8d4f0"/><stop offset="1" stop-color="#6a9ec8"/></linearGradient></defs><path d="M1.5 6 L6 1.5 H18.5 V14 L14 18.5 H1.5 Z" fill="#fafafa" stroke="#444" stroke-width="1"/><rect x="1.5" y="6" width="12.5" height="12.5" fill="url(#cubeg)" stroke="#2a5a8a" stroke-width="1.1"/><path d="M14 6 L18.5 1.5 M9 1.5 V5 M18.5 10 H15" stroke="#333" stroke-width="0.8"/></svg>
<svg style="left:767px;top:141px;" width="5" height="3" viewBox="0 0 5 3"><path d="M0 0 H5 L2.5 3 Z" fill="#8a8a8a"/></svg>
<svg style="left:781px;top:132px;" width="19" height="20" viewBox="0 0 19 20"><path d="M1.5 4 L7 1 L17.5 3 V16 L12 19 L1.5 17 Z" fill="#f4f4f4" stroke="#555" stroke-width="1"/><path d="M1.5 4 L12 6 V19 L1.5 17 Z" fill="#6aa6d6" stroke="#2a5a8a" stroke-width="0.9"/><path d="M12 6 L17.5 3" stroke="#555"/></svg>
<svg style="left:807px;top:141px;" width="5" height="3" viewBox="0 0 5 3"><path d="M0 0 H5 L2.5 3 Z" fill="#8a8a8a"/></svg>
<svg style="left:820px;top:133px;" width="21" height="18" viewBox="0 0 21 18"><path d="M1 9 C5 3 16 3 20 9 C16 15 5 15 1 9 Z" fill="#e8e8e8" stroke="#9a9a9a" stroke-width="1"/><circle cx="10.5" cy="9" r="4.5" fill="#6a6a6a"/><path d="M10.5 1 V17" stroke="#222" stroke-width="1.2"/></svg>
<svg style="left:847px;top:141px;" width="5" height="3" viewBox="0 0 5 3"><path d="M0 0 H5 L2.5 3 Z" fill="#8a8a8a"/></svg>
<svg style="left:860px;top:132px;" width="21" height="20" viewBox="0 0 21 20"><circle cx="9" cy="8.5" r="7.5" fill="#e4e4e4"/><path d="M11 18 L19 9 L21 11 L13 19.5 Z" fill="#dedede"/></svg>
<svg style="left:885px;top:132px;" width="21" height="20" viewBox="0 0 21 20"><circle cx="10.5" cy="8" r="7" fill="#e2e2e2"/><rect x="1" y="11" width="19" height="8.5" fill="#e8e8e8"/><path d="M3 14 H8 M12 14 H18 M5 17 H9 M12 17 H16" stroke="#f8f8f8" stroke-width="1.5"/></svg>
<svg style="left:913px;top:141px;" width="5" height="3" viewBox="0 0 5 3"><path d="M0 0 H5 L2.5 3 Z" fill="#8a8a8a"/></svg>
<svg style="left:926px;top:133px;" width="20" height="18" viewBox="0 0 20 18"><rect x="1" y="1" width="18" height="12" fill="#e6e6e6" stroke="#4a4a4a" stroke-width="1.3"/><path d="M10 13 V16 M6 16.5 H14" stroke="#4a4a4a" stroke-width="1.5"/></svg>
<svg style="left:953px;top:141px;" width="5" height="3" viewBox="0 0 5 3"><path d="M0 0 H5 L2.5 3 Z" fill="#8a8a8a"/></svg>
<svg style="left:1197px;top:134px;" width="14" height="16" viewBox="0 0 14 16"><rect x="1" y="1" width="11.5" height="13.5" fill="none" stroke="#a6a6a6" stroke-width="1.1"/><path d="M7.5 4.5 L4 7.8 L7.5 11 Z" fill="#9a9a9a"/></svg>
<svg style="left:1223px;top:134px;" width="14" height="16" viewBox="0 0 14 16"><rect x="1" y="1" width="11.5" height="13.5" fill="none" stroke="#a6a6a6" stroke-width="1.1"/><path d="M6 4.5 L9.5 7.8 L6 11 Z" fill="#9a9a9a"/></svg>
<div style="left:1251px;top:145px;width:10px;height:3px;background:#a6a6a6"></div>
<svg style="left:1274px;top:135px;" width="15" height="14" viewBox="0 0 15 14"><rect x="1" y="4.5" width="9.5" height="8" fill="#fff" stroke="#a6a6a6" stroke-width="1.1"/><path d="M4 4.5 V1 H13.5 V9 H10.5" fill="none" stroke="#a6a6a6" stroke-width="1.1"/></svg>
<svg style="left:1302px;top:136px;" width="12" height="12" viewBox="0 0 12 12"><path d="M1 1 L11 11 M11 1 L1 11" stroke="#a6a6a6" stroke-width="1.1"/></svg>
<svg style="left:1223px;top:161px;" width="32" height="26" viewBox="0 0 32 26"><path d="M4.2 10.5 L12.9 19 L27.8 4.2" fill="none" stroke="#d8ebd3" stroke-width="7.2"/></svg>
<svg style="left:1269px;top:190px;" width="27" height="27" viewBox="0 0 27 27"><path d="M5.3 5.6 L21.5 21.8 M21.5 5.6 L5.3 21.8" stroke="#c9c4c4" stroke-width="7.6" stroke-linecap="round"/><path d="M5.3 5.6 L21.5 21.8 M21.5 5.6 L5.3 21.8" stroke="#f0dbcf" stroke-width="6.4" stroke-linecap="round"/></svg>
<div style="left:1302px;top:178px;width:26px;height:25px;background:#d6d6d6;border:1px solid #8c8c8c"></div>
<div style="left:1302px;top:202px;width:26px;height:25px;background:#d6d6d6;border:1px solid #8c8c8c"></div>
<div style="left:1302px;top:226px;width:26px;height:25px;background:#d6d6d6;border:1px solid #8c8c8c"></div>
<div style="left:1302px;top:250px;width:26px;height:25px;background:#d6d6d6;border:1px solid #8c8c8c"></div>
<div style="left:1302px;top:274px;width:26px;height:25px;background:#ffffff;border:1px solid #8c8c8c"></div>
<div style="left:1302px;top:298px;width:26px;height:25px;background:#d6d6d6;border:1px solid #8c8c8c"></div>
<svg style="left:1304px;top:179px;" width="22" height="22" viewBox="0 0 22 22"><path d="M5.5 10 V19.5 H16.5 V10" fill="#fafafa" stroke="#222" stroke-width="1.1"/><rect x="9.5" y="13" width="3.5" height="6.5" fill="#fff" stroke="#222" stroke-width="1"/><path d="M2.8 10.5 L11 3 L19.2 10.5" fill="none" stroke="#0f3f7a" stroke-width="2.8"/><path d="M3.6 10 L11 3.4 L18.4 10" fill="none" stroke="#6aa6e0" stroke-width="0.9"/></svg>
<svg style="left:1304px;top:203px;" width="22" height="22" viewBox="0 0 22 22"><path d="M5 7.5 L8 5.5 L9.5 6.3 L12 4.3 L13.5 5.1 L16 3.3 L18.5 4.8 V15.5 L16 17.5 L13.5 17.3 L11 19.2 L9.5 18.8 L7 20.5 L5 19 Z" fill="#f6f6f6" stroke="#222" stroke-width="1"/><path d="M7 8.8 V20.5 M11 7.6 V19.2 M15 6.4 V17.6 M5 7.5 L7 8.8 L9.5 6.3 M9 8 L11 7.6 L13.5 5.1 M13 6.8 L15 6.4 L18.5 4.8" fill="none" stroke="#222" stroke-width="0.9"/></svg>
<svg style="left:1304px;top:227px;" width="22" height="22" viewBox="0 0 22 22"><path d="M2.5 20 V5.5 H8 L9.5 7 H17 V10.5" fill="#d6d6d6" stroke="#222" stroke-width="1.1"/><path d="M2.5 20 L6.5 10.5 H21 L17 20 Z" fill="#f2f2f2" stroke="#222" stroke-width="1.1"/></svg>
<svg style="left:1304px;top:252px;" width="22" height="22" viewBox="0 0 22 22"><rect x="2.5" y="3" width="17" height="16" rx="1.5" fill="#f6f6f6" stroke="#222" stroke-width="1.1"/><rect x="5" y="6" width="6" height="3" fill="#f0c020"/><rect x="14" y="6" width="3" height="3" fill="#f0c020"/><path d="M4.5 15 H13 V13 H10 V10.5 H7 V13 H4.5 Z" fill="#f0c020"/><rect x="14.5" y="11" width="3" height="6" fill="#bbb"/></svg>
<svg style="left:1304px;top:276px;" width="22" height="22" viewBox="0 0 22 22"><circle cx="11" cy="11" r="8" fill="#d8b838" stroke="#8a5a20" stroke-width="0.8"/><path d="M11 11 L11 3 A8 8 0 0 1 18.8 10 Z" fill="#e03020"/><path d="M11 11 L11 3 A8 8 0 0 0 3 11 Z" fill="#3a8ee0"/><path d="M11 11 L3 11 A8 8 0 0 0 8 18.4 Z" fill="#3aa83a"/></svg>
<svg style="left:1304px;top:300px;" width="22" height="22" viewBox="0 0 22 22"><rect x="2.5" y="2.5" width="17" height="17" rx="1.5" fill="#f4f4f4" stroke="#1c2a3a" stroke-width="1.1"/><rect x="3" y="3" width="16" height="3" fill="#5da2e0"/><rect x="5" y="8" width="3.5" height="2" fill="#2a6fb5"/><rect x="5" y="11.5" width="3.5" height="2" fill="#2a6fb5"/><rect x="5" y="15" width="3.5" height="2" fill="#2a6fb5"/><path d="M10 9 H17 M10 12.5 H17 M10 16 H17" stroke="#333"/></svg>
<svg style="left:278px;top:826px;" width="50" height="52" viewBox="0 0 50 52"><path d="M13 10.5 H31" stroke="#b91c1c" stroke-width="4.5"/><path d="M13 10.5 H31" stroke="#e58080" stroke-width="2"/><path d="M30 6.5 L39 10.5 L30 14.5 Z" fill="#d42020" stroke="#8a1010" stroke-width="0.8"/><path d="M41 6 L45 15 M45 6 L41 15" stroke="#e02020" stroke-width="1.1"/><path d="M9 13 V33" stroke="#1f3fa0" stroke-width="4.5"/><path d="M9 13 V33" stroke="#6aa6e6" stroke-width="2"/><path d="M5 32 L9 40 L13 32 Z" fill="#1f3fd0" stroke="#10207a" stroke-width="0.8"/><path d="M5.5 41.5 H10 L5.5 49.5 H10.5" fill="none" stroke="#1f1fe0" stroke-width="1.1"/><circle cx="9" cy="10.5" r="4.6" fill="#1f2a1f"/><path d="M6.5 7 L9 10.5 L11.5 7 M9 10.5 V15" stroke="#3cc03c" stroke-width="0.9" fill="none"/></svg>
<svg style="left:247px;top:149px;" width="1080" height="746" viewBox="0 0 1080 746"><defs><filter id="sh" x="-5%" y="-5%" width="110%" height="110%"><feGaussianBlur stdDeviation="2.2"/></filter></defs><circle cx="428.8" cy="372.4" r="342.6" fill="#6a6a6a" filter="url(#sh)" transform="translate(3.2,3.2)"/><circle cx="428.8" cy="372.4" r="342.6" fill="#bdbdbd" stroke="#0a0a0a" stroke-width="1.3"/></svg>
<svg style="left:590px;top:440px;" width="180" height="140" viewBox="0 0 180 140"><defs><linearGradient id="hg" x1="0.15" y1="0.1" x2="0.85" y2="0.9"><stop offset="0" stop-color="#303030"/><stop offset="0.3" stop-color="#6a6a6a"/><stop offset="0.62" stop-color="#f4f4f4"/><stop offset="1" stop-color="#ffffff"/></linearGradient></defs><g stroke="#111" stroke-width="1.1" fill="none"><path d="M11.3 54.2 H78.0"/><path d="M22.6 9.0 V38.0"/><path d="M22.6 98.0 V125.5"/><path d="M120.0 19.4 H77.2 L79.5 32.0"/></g><path d="M19.5 36.8 L22.6 54.0 L25.8 36.8 Z" fill="#111"/><path d="M19.5 99.2 L22.6 81.6 L25.8 99.2 Z" fill="#111"/><path d="M76.8 30.5 L84.6 47.0 L83.2 29.8 Z" fill="#111"/><circle cx="85.80" cy="54.00" r="6.6" fill="url(#hg)" stroke="#4aa6f2" stroke-width="1.9"/><circle cx="105.10" cy="62.00" r="6.6" fill="url(#hg)" stroke="#4aa6f2" stroke-width="1.9"/><circle cx="113.10" cy="81.30" r="6.6" fill="url(#hg)" stroke="#4aa6f2" stroke-width="1.9"/><circle cx="105.10" cy="100.60" r="6.6" fill="url(#hg)" stroke="#4aa6f2" stroke-width="1.9"/><circle cx="85.80" cy="108.60" r="6.6" fill="url(#hg)" stroke="#4aa6f2" stroke-width="1.9"/><circle cx="66.50" cy="100.60" r="6.6" fill="url(#hg)" stroke="#4aa6f2" stroke-width="1.9"/><circle cx="58.50" cy="81.30" r="6.6" fill="url(#hg)" stroke="#4aa6f2" stroke-width="1.9"/><circle cx="66.50" cy="62.00" r="6.6" fill="url(#hg)" stroke="#4aa6f2" stroke-width="1.9"/><path d="M12.0 81.3 H81.0" stroke="#111" stroke-width="1.1"/><g stroke="#1a1aff" stroke-width="1"><path d="M82.3 81.3 H89.3 M85.8 77.8 V84.8 M83.0 78.5 L88.6 84.1 M83.0 84.1 L88.6 78.5"/></g><path d="M88.8 81.3 H95.8" stroke="#1a1aff" stroke-width="1.1"/><path d="M94.3 79.1 L102.8 81.3 L94.3 83.5 Z" fill="#1a1aff"/><circle cx="136.6" cy="19.0" r="6.3" fill="none" stroke="#111" stroke-width="1.1"/><path d="M140.0 10.3 L132.8 27.8" stroke="#111" stroke-width="1.1"/></svg>
<div class="t" style="left:602.00px;top:497px;font-size:19.5px;line-height:21.782px;color:#111;transform:scaleX(0.9379);transform-origin:0 0;-webkit-text-stroke:0.35px #111;">20</div>
<div class="t" style="left:738.60px;top:450px;font-size:19.5px;line-height:21.782px;color:#111;transform:scaleX(0.8593);transform-origin:0 0;-webkit-text-stroke:0.35px #111;">10</div>
<div class="t" style="left:728.20px;top:483px;font-size:19.5px;line-height:21.782px;color:#111;transform:scaleX(0.9610);transform-origin:0 0;-webkit-text-stroke:0.35px #111;">8</div>
<div style="left:0px;top:895px;width:2px;height:15px;background:#9cc0dc"></div>
<div style="left:2px;top:895px;width:65px;height:1px;background:#1a1a1a"></div>
<div style="left:2px;top:896px;width:16px;height:14px;background:#b3b3b3;border-right:1px solid #dcdcdc"></div>
<div style="left:18px;top:896px;width:16px;height:14px;background:#b3b3b3;border-right:1px solid #dcdcdc"></div>
<div style="left:34px;top:896px;width:16px;height:14px;background:#b3b3b3;border-right:1px solid #dcdcdc"></div>
<div style="left:50px;top:896px;width:16px;height:14px;background:#b3b3b3;border-right:1px solid #dcdcdc"></div>
<svg style="left:2px;top:896px;" width="64" height="14" viewBox="0 0 64 14"><g fill="#8c8c8c"><rect x="3.5" y="3" width="1.3" height="9"/><path d="M12 3 L6 7.5 L12 12 Z"/><path d="M27 3 L21 7.5 L27 12 Z"/><path d="M38 3 L44 7.5 L38 12 Z"/><path d="M52 3 L58 7.5 L52 12 Z"/><rect x="58.5" y="3" width="1.3" height="9"/></g></svg>
<div class="t" style="left:79.60px;top:896px;font-size:12px;line-height:13.404px;color:#111;font-weight:bold;-webkit-text-stroke:0;transform:scaleX(0.9833);transform-origin:0 0;">Model</div>
<div style="left:123px;top:895px;width:69px;height:16px;background:#d6d6d6;border:1px solid #8c8c8c;border-bottom:none"></div>
<div style="left:191px;top:895px;width:109px;height:16px;background:#d6d6d6;border:1px solid #8c8c8c;border-bottom:none"></div>
<div class="t" style="left:134.50px;top:896px;font-size:11.6px;line-height:12.957px;color:#111;transform:scaleX(0.9492);transform-origin:0 0;">3D Views</div>
<div class="t" style="left:201.50px;top:896px;font-size:11.6px;line-height:12.957px;color:#111;transform:scaleX(1.0301);transform-origin:0 0;">Motion Study 1</div>
<div class="t" style="left:1.40px;top:915px;font-size:11.6px;line-height:12.957px;color:#111;transform:scaleX(1.0086);transform-origin:0 0;">Select feature to pattern</div>
<div style="left:1036px;top:913px;width:1px;height:15px;background:#d0d0d0"></div>
<div style="left:1044px;top:913px;width:1px;height:15px;background:#d0d0d0"></div>
<div style="left:1115px;top:913px;width:1px;height:15px;background:#d0d0d0"></div>
<div style="left:1131px;top:913px;width:1px;height:15px;background:#d0d0d0"></div>
<div class="t" style="left:1048.00px;top:915px;font-size:11.6px;line-height:12.957px;color:#111;transform:scaleX(1.0171);transform-origin:0 0;">Editing Part</div>
<div class="t" style="left:1163.00px;top:915px;font-size:11.6px;line-height:12.957px;color:#a8a8a8;-webkit-text-stroke:0;transform:scaleX(0.9896);transform-origin:0 0;">MMGS</div>
<svg style="left:1218px;top:918px;" width="6" height="4" viewBox="0 0 6 4"><path d="M0 3.5 L3 0.5 L6 3.5 Z" fill="#9a9a9a"/></svg>
<svg style="left:1288px;top:912px;" width="20" height="17" viewBox="0 0 20 17"><path d="M2 9 L11 3 L18.5 7 V10 L10 15.5 L2 11.5 Z" fill="#f4f4f4" stroke="#333" stroke-width="1.1" stroke-linejoin="round"/><path d="M2 9 L10 13 L18.5 7 M10 13 V15.5" fill="none" stroke="#333" stroke-width="1"/><ellipse cx="10.5" cy="7.5" rx="3" ry="1.6" fill="none" stroke="#333"/></svg>
<svg style="left:1317px;top:918px;" width="10" height="10" viewBox="0 0 10 10"><g fill="#b0b0b0"><rect x="7" y="1" width="2" height="2"/><rect x="4" y="4" width="2" height="2"/><rect x="7" y="4" width="2" height="2"/><rect x="1" y="7" width="2" height="2"/><rect x="4" y="7" width="2" height="2"/><rect x="7" y="7" width="2" height="2"/></g></svg>
</body></html>
